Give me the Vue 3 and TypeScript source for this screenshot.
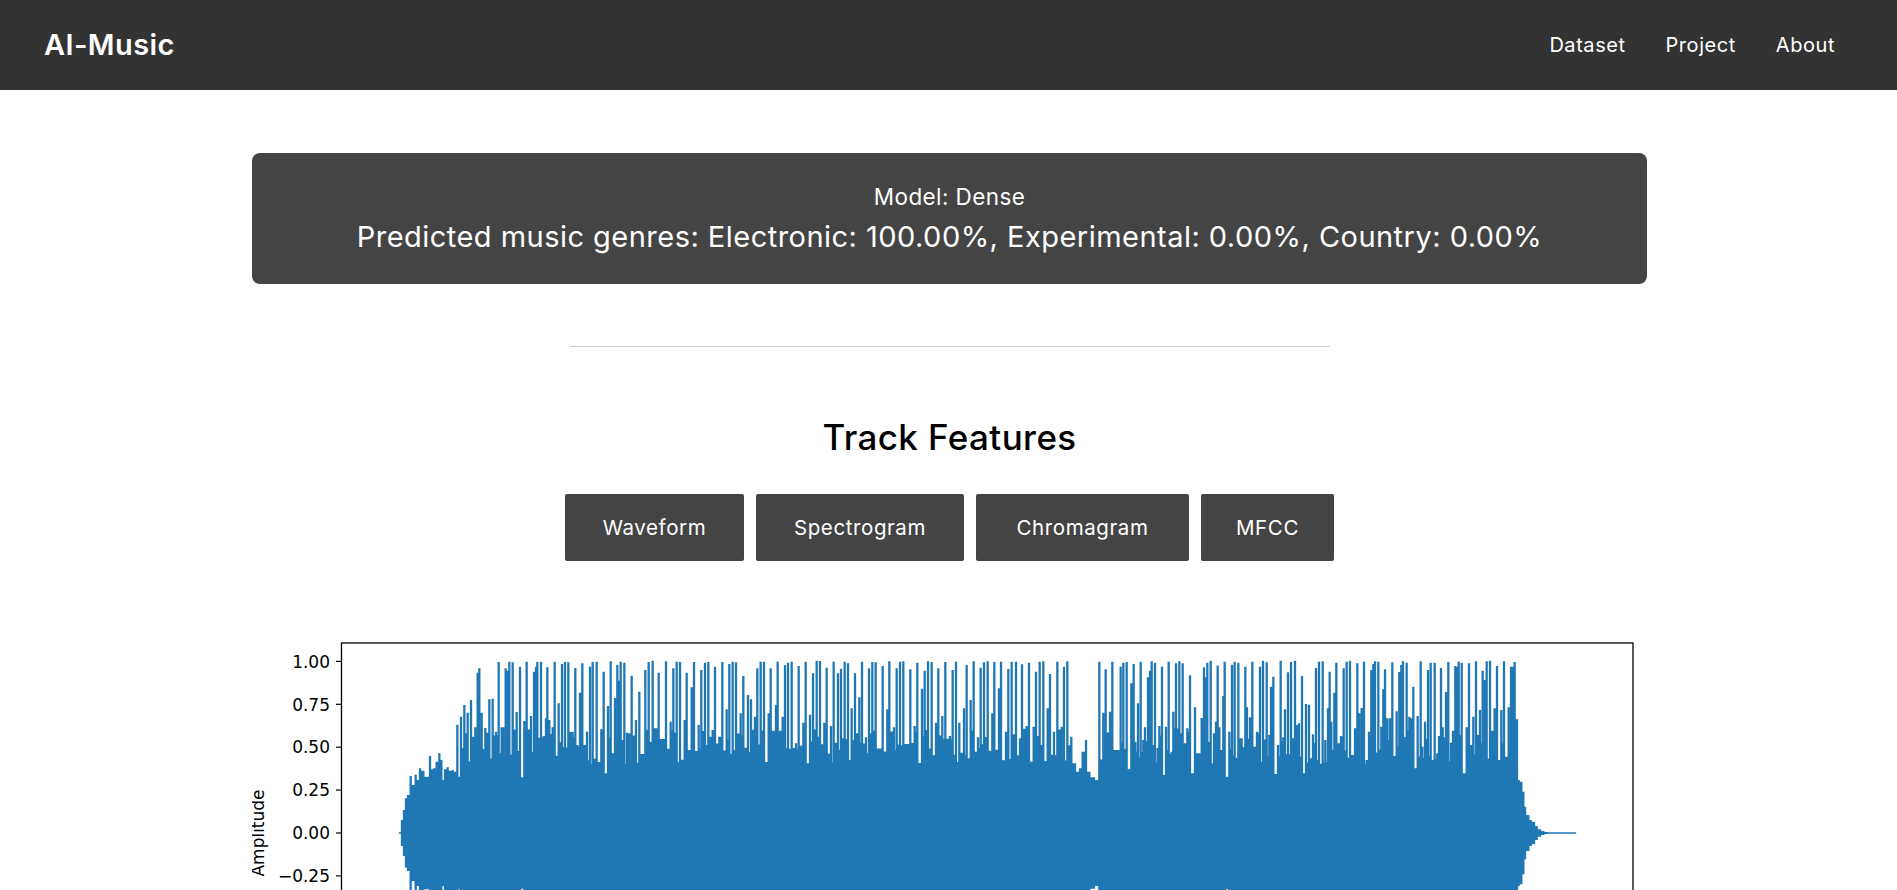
<script setup lang="ts">
const links: string[] = ['Dataset', 'Project', 'About']
const tabs: string[] = ['Waveform', 'Spectrogram', 'Chromagram', 'MFCC']
const MID = 833
const UNIT = 171.6
const ticks = [1, 0.75, 0.5, 0.25, 0, -0.25, -0.5, -0.75, -1].map((v) => ({
  y: MID - v * UNIT,
  label: (v < 0 ? '\u2212' : '') + Math.abs(v).toFixed(2),
}))

const strips: [number, number[]][] = [
  [400, [0,580,6,540,12,510,18,475,24,465,32,408,38,435,47,404,52,420,60,385,70,392,80,410,90,348,95,388,102,385,110,365,118,340,124,360,132,420,135,388,143,382,150,392,158,390,165,395,172,254,177,410,183,230,193,195,197,280,203,218,213,180,220,290,226,262,233,98,238,85,245,218,256,264,262,278,268,178,278,176,288,275,296,66,305,262,310,262,317,85,322,92,328,65,338,67,350,216,360,80,368,412,373,243,380,65,393,228,402,95,408,80,412,66,423,65,432,288,438,235,442,82,448,240,452,282,458,262,464,65,476,190,486,72,495,66,505,67,518,275,526,84,532,315,540,158,547,70,553,315,561,275,570,80,578,66,590,65,604,268,611,95,617,400,624,198,632,64,645,174,652,75,657,122,662,65,673,68,681,278,688,280,695,107,708,240,718,155]],
  [640, [16,90,26,66,38,62,56,98,78,64,92,245,100,85,110,65,120,66,134,240,140,98,155,142,162,66,176,255,184,90,195,68,205,66,218,270,225,80,238,290,247,66,260,208,268,72,278,65,288,67,302,220,310,108,324,165,333,178,345,230,352,85,362,65,372,65,386,220,392,85,408,195,413,65,428,230,435,76,444,68,455,65,468,310,476,78,490,248,497,65,510,224,519,100,530,62,540,63,553,248,560,83,573,258,581,65,594,100,603,86,614,65,624,70,635,205,645,100,658,172,666,65,678,292,687,85,697,66,707,67]],
  [880, [8,78,22,208,28,64,42,262,50,85,60,65,70,64,83,312,91,88,104,258,112,68,126,146,134,92,144,64,155,66,168,248,175,85,187,228,196,66,210,288,218,90,228,65,238,248,252,205,260,75,272,180,281,64,294,292,302,83,312,67,323,64,337,220,343,66,357,145,363,65,378,275,385,87,395,65,408,65,420,295,426,73,440,258,447,68,461,260,468,95,479,65,490,64,503,205,510,102,522,275,532,65,545,260,552,80,562,64,574,290,585,370,592,395,600,385,608,335,618,300,628,395,642,412,650,420,658,65,670,218,677,88,690,215,697,65,708,330]],
  [1120, [2,80,10,68,20,66,28,388,34,130,41,72,46,305,54,190,62,65,70,300,75,262,84,112,90,92,95,64,105,68,113,324,118,258,126,80,134,405,138,260,146,65,155,335,160,215,168,70,178,64,188,70,197,310,202,265,210,106,218,400,225,202,232,340,245,234,252,82,257,112,262,68,272,62,282,280,288,245,293,77,298,262,303,330,310,168,314,65,325,410,328,275,336,74,344,65,355,68,365,295,370,322,376,80,381,202,390,232,397,65,406,320,411,275,420,80,429,62,440,67,448,285,453,140,460,110,468,402,474,315,482,62,490,292,495,208,504,97,513,66,520,295,525,62,532,255,537,250,546,108,552,400,558,192,567,194,574,355,579,283,588,84,597,65,608,64,616,300,624,205,629,95,634,245,643,158,649,68,657,310,663,288,671,85,680,65,690,62,700,345,705,265,712,70,718,220]],
  [1360, [5,204,12,65,20,360,27,275,34,90,40,72,45,64,55,65,64,260,70,148,75,88,82,235,90,235,97,67,104,348,110,214,118,96,124,75,129,64,140,68,148,230,153,235,160,140,167,385,173,228,182,64,187,320,195,245,204,90,212,68,218,360,224,68,232,340,237,288,243,84,248,262,258,156,265,66,273,308,279,272,286,78,292,80,296,65,305,68,315,400,320,262,327,70,334,315,340,230,348,64,354,285,360,210,368,92,375,120,380,64,390,62,397,272,404,205,411,78,417,360,424,210,432,64,438,350,446,202,453,80,459,80,464,66,471,238,476,420,484,425,490,455,495,500,505,525,512,540,522,545,530,558,540,568,550,573,560,576,575,578,645,578]],
]

const pts: { x: number; y: number }[] = []
for (const [ox, arr] of strips) {
  for (let i = 0; i < arr.length; i += 2) pts.push({ x: ox + arr[i] / 3, y: 640 + arr[i + 1] / 3 })
}

const f = (n: number): string => n.toFixed(2)
function bar(x0: number, x1: number, top: number): string {
  const t = Math.min(top, MID - 0.8)
  return `M${f(x0)} ${f(t)}H${f(x1)}V${f(2 * MID - t)}H${f(x0)}Z`
}
let seed = 17
function rand(): number {
  seed = (seed * 16807) % 2147483647
  return seed / 2147483647
}
let wave = ''
pts.forEach((p, i) => {
  wave += bar(p.x - 1.15, p.x + 1.15, p.y)
  const n = pts[i + 1]
  if (n) {
    const floor = 728 + rand() * 36
    wave += bar(p.x, n.x, Math.max(p.y, n.y, floor))
  }
})
</script>

<template>
  <div class="page">
    <header class="nav">
      <a class="logo">AI-Music</a>
      <nav class="links">
        <a v-for="l in links" :key="l" class="link">{{ l }}</a>
      </nav>
    </header>

    <main class="main">
      <section class="result">
        <p class="model">Model: Dense</p>
        <p class="genres">Predicted music genres: Electronic: 100.00%, Experimental: 0.00%, Country: 0.00%</p>
      </section>

      <hr class="rule" />

      <h2 class="title">Track Features</h2>

      <div class="tabs">
        <button v-for="t in tabs" :key="t" class="tab" type="button">{{ t }}</button>
      </div>

      <svg class="plot" width="1395" height="420" viewBox="252 630 1395 420" xmlns="http://www.w3.org/2000/svg">
        <path :d="wave" fill="#1f77b4" />
        <rect x="341.5" y="643" width="1291.5" height="380" fill="none" stroke="#000" stroke-width="1.3" />
        <g v-for="t in ticks" :key="t.label">
          <line x1="336" x2="341" :y1="t.y" :y2="t.y" stroke="#000" stroke-width="1.2" />
          <text class="tick" x="330" :y="t.y + 6.2" text-anchor="end">{{ t.label }}</text>
        </g>
        <text class="tick" transform="translate(264 833) rotate(-90)" text-anchor="middle">Amplitude</text>
      </svg>
    </main>
  </div>
</template>

<style scoped>
.page {
  font-family: Inter, "Open Sans", sans-serif;
  color: #000;
}
.nav {
  height: 90px;
  background: #333;
  display: flex;
  align-items: center;
  justify-content: space-between;
  padding: 0 62px 2px 44px;
  box-sizing: border-box;
}
.logo {
  color: #fff;
  font-size: 29px;
  font-weight: 600;
  letter-spacing: 0.4px;
}
.links {
  display: flex;
  gap: 40px;
}
.link {
  color: #fff;
  font-size: 20px;
  font-weight: 400;
  letter-spacing: 0.55px;
  position: relative;
  top: 1px;
}
.main {
  display: flex;
  flex-direction: column;
  align-items: center;
  padding: 63px 0 0 2px;
}
.result {
  width: 1395px;
  height: 131px;
  box-sizing: border-box;
  background: #444;
  border-radius: 8px;
  color: #fff;
  display: flex;
  flex-direction: column;
  align-items: center;
  justify-content: center;
  gap: 9px;
}
.result p {
  margin: 0;
}
.model {
  font-size: 22.5px;
  letter-spacing: 0.4px;
  line-height: 26px;
}
.genres {
  font-size: 29px;
  letter-spacing: 0.47px;
  line-height: 35px;
}
.rule {
  width: 760px;
  height: 1px;
  border: 0;
  margin: 62px 0 0;
  background: #ccc;
}
.title {
  margin: 68px 0 0;
  font-size: 35px;
  line-height: 44px;
  font-weight: 500;
  letter-spacing: 0.4px;
}
.tabs {
  display: grid;
  grid-template-columns: 179px 208px 213px 133px;
  gap: 12px;
  margin-top: 35px;
}
.tab {
  height: 67px;
  background: #444;
  color: #fff;
  border: 0;
  border-radius: 2px;
  font-family: inherit;
  font-size: 20.5px;
  letter-spacing: 0.6px;
  padding: 0;
}
.plot {
  display: block;
  margin-top: 69px;
}
.tick {
  font-family: "DejaVu Sans", sans-serif;
  font-size: 17px;
  fill: #000;
}
</style>

<style>
html, body {
  margin: 0;
  background: #fff;
}
</style>
